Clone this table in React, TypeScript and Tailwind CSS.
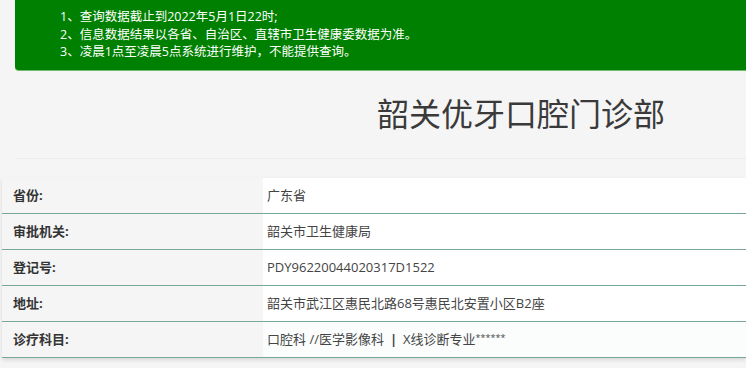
import React from "react";

const rows: [string, React.ReactNode][] = [
  ["省份:", "广东省"],
  ["审批机关:", "韶关市卫生健康局"],
  ["登记号:", "PDY96220044020317D1522"],
  ["地址:", "韶关市武江区惠民北路68号惠民北安置小区B2座"],
  [
    "诊疗科目:",
    <>
      口腔科 //医学影像科 <span className="mx-[6px] font-bold">|</span> X线诊断专业<span className="text-[9px] leading-none self-start mt-[11px]">******</span>
    </>,
  ],
];

export default function App() {
  return (
    <div
      className="w-[746px] h-[368px] overflow-hidden bg-[#f5f5f5] text-[#333]"
      style={{ fontFamily: '"Open Sans", "Noto Sans CJK SC", sans-serif' }}
    >
      <div className="ml-[15px] h-[71px] bg-[#008000] rounded-bl-[4px] border-b border-[#6fb86f] text-white text-[12.5px] leading-[17.5px] pl-[45px] pt-[8px]">
        <div>1、查询数据截止到2022年5月1日22时;</div>
        <div>2、信息数据结果以各省、自治区、直辖市卫生健康委数据为准。</div>
        <div>3、凌晨1点至凌晨5点系统进行维护，不能提供查询。</div>
      </div>
      <div className="h-[87px] flex items-center pl-[377px] pb-[2px]">
        <h1 className="text-[32px] leading-none text-[#3a3a3a] font-normal">韶关优牙口腔门诊部</h1>
      </div>
      <div className="ml-[15px] h-px bg-[#ececec]" />
      <div className="mt-[19px] ml-[2px] shadow-[0_2px_4px_rgba(0,0,0,0.12)]">
        {rows.map(([label, value], i) => (
          <div key={i} className="flex h-[36px] border-b border-[#78a898]">
            <div className="w-[261px] shrink-0 flex items-center pl-[11px] text-[13px] font-bold text-[#333] bg-[#f5f5f5]">
              {label}
            </div>
            <div
              className={`flex-1 flex items-center pl-[4px] text-[13px] text-[#444] ${
                i === 4 ? "bg-[#fbfdfd]" : "bg-white"
              }`}
            >
              {value}
            </div>
          </div>
        ))}
      </div>
    </div>
  );
}
